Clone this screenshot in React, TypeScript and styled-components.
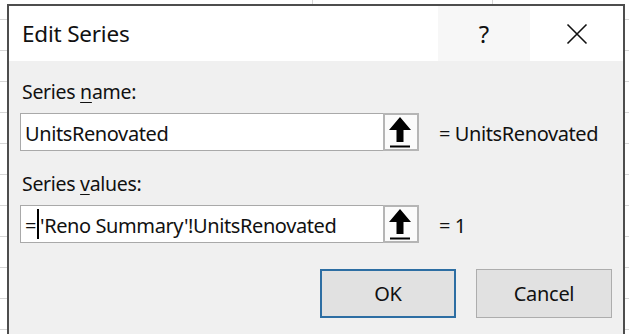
import React from "react";
import styled, { createGlobalStyle } from "styled-components";

const GlobalStyle = createGlobalStyle`
    html, body {
        margin: 0;
        padding: 0;
        width: 629px;
        height: 334px;
        overflow: hidden;
    }
    body {
        background-color: #ffffff;
        background-image:
            linear-gradient(to right, transparent 312px, #d6d6d6 312px, #d6d6d6 313px, transparent 313px),
            linear-gradient(to right, transparent 492px, #d6d6d6 492px, #d6d6d6 493px, transparent 493px),
            repeating-linear-gradient(to bottom, transparent 0, transparent 19px, #d6d6d6 19px, #d6d6d6 20px, transparent 20px, transparent 31px);
        font-family: "Noto Sans", "Open Sans", sans-serif;
        color: #000;
    }
`;

const Page = styled.div`
    padding: 4px 0 0 7px;
`;

const Dialog = styled.div`
    width: 614px;
    height: 340px;
    border: 2px solid #4d4d4d;
    background: #f0f0f0;
    display: flex;
    flex-direction: column;
`;

const TitleBar = styled.div`
    height: 55px;
    background: #ffffff;
    display: flex;
    align-items: stretch;
`;

const Title = styled.div`
    flex: 1;
    padding-left: 13px;
    font-size: 22.5px;
    letter-spacing: -0.2px;
    line-height: 55px;
    color: #111;
`;

const TitleButton = styled.div<{ $shade?: boolean }>`
    width: ${p => (p.$shade ? "92px" : "93px")};
    background: ${p => (p.$shade ? "#f7f7f7" : "#ffffff")};
    display: flex;
    align-items: center;
    justify-content: center;
    font-size: 24px;
    color: #111;
`;

const Body = styled.div`
    padding: 17px 11px 0 11px;
    display: flex;
    flex-direction: column;
`;

const Label = styled.div`
    height: 28px;
    line-height: 28px;
    font-size: 19.5px;
    letter-spacing: -0.3px;
    padding-left: 2px;
    margin-bottom: 7px;
    color: #111;

    u {
        text-decoration-thickness: 1px;
        text-underline-offset: 3px;
    }
`;

const FieldRow = styled.div<{ $gap: number }>`
    display: flex;
    align-items: center;
    height: 38px;
    margin-bottom: ${p => p.$gap}px;
`;

const Input = styled.div`
    box-sizing: border-box;
    width: 363px;
    height: 38px;
    border: 1px solid #a9a9a9;
    border-right: none;
    background: #ffffff;
    display: flex;
    align-items: center;
    padding-left: 4px;
    padding-top: 2px;
    font-size: 20px;
    letter-spacing: -0.4px;
    white-space: nowrap;
    overflow: hidden;
    color: #111;
`;

const Caret = styled.span`
    display: inline-block;
    width: 2px;
    height: 30px;
    background: #000;
    margin: -2px 1px 0 1px;
`;

const RefButton = styled.div`
    box-sizing: border-box;
    width: 36px;
    height: 38px;
    border: 2px solid #b5b5b5;
    background: #fbfbfb;
    display: flex;
    align-items: center;
    justify-content: center;
`;

const Result = styled.div`
    margin-left: 20px;
    padding-top: 2px;
    font-size: 20px;
    letter-spacing: -0.4px;
    white-space: nowrap;
    color: #111;
`;

const Buttons = styled.div`
    display: flex;
    justify-content: flex-end;
    gap: 20px;
`;

const Button = styled.div<{ $default?: boolean }>`
    box-sizing: border-box;
    width: 136px;
    height: 49px;
    background: #e1e1e1;
    border: ${p => (p.$default ? "2px solid #2d6ea3" : "1px solid #adadad")};
    display: flex;
    align-items: center;
    justify-content: center;
    font-size: 20px;
    letter-spacing: -0.3px;
    color: #111;
`;

const UpArrow = () => (
    <svg width="32" height="34" viewBox="0 0 32 34">
        <path d="M15 2 L26 15 L18.5 15 L18.5 27 L11.5 27 L11.5 15 L4 15 Z" fill="#000" />
        <rect x="5" y="30.5" width="20" height="2" fill="#000" />
    </svg>
);

const CloseIcon = () => (
    <svg width="22" height="22" viewBox="0 0 22 22">
        <path d="M1.5 1.5 L20.5 20.5 M20.5 1.5 L1.5 20.5" stroke="#111" strokeWidth="1.6" />
    </svg>
);

export default function App() {
    return (
        <Page>
            <GlobalStyle />
            <Dialog>
                <TitleBar>
                    <Title>Edit Series</Title>
                    <TitleButton $shade>?</TitleButton>
                    <TitleButton><CloseIcon /></TitleButton>
                </TitleBar>
                <Body>
                    <Label>Series <u>n</u>ame:</Label>
                    <FieldRow $gap={19}>
                        <Input>UnitsRenovated</Input>
                        <RefButton><UpArrow /></RefButton>
                        <Result>= UnitsRenovated</Result>
                    </FieldRow>
                    <Label>Series <u>v</u>alues:</Label>
                    <FieldRow $gap={26}>
                        <Input>=<Caret />'Reno Summary'!UnitsRenovated</Input>
                        <RefButton><UpArrow /></RefButton>
                        <Result>= 1</Result>
                    </FieldRow>
                    <Buttons>
                        <Button $default>OK</Button>
                        <Button>Cancel</Button>
                    </Buttons>
                </Body>
            </Dialog>
        </Page>
    );
}
